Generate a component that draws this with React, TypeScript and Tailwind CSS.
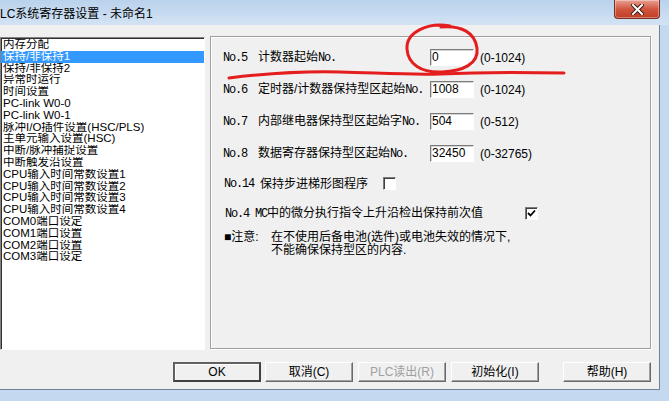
import React from 'react';

const items = [
  '内存分配',
  '保持/非保持1',
  '保持/非保持2',
  '异常时运行',
  '时间设置',
  'PC-link W0-0',
  'PC-link W0-1',
  '脉冲I/O插件设置(HSC/PLS)',
  '主单元输入设置(HSC)',
  '中断/脉冲捕捉设置',
  '中断触发沿设置',
  'CPU输入时间常数设置1',
  'CPU输入时间常数设置2',
  'CPU输入时间常数设置3',
  'CPU输入时间常数设置4',
  'COM0端口设定',
  'COM1端口设置',
  'COM2端口设置',
  'COM3端口设定',
];

const mono = "font-['Liberation_Mono',monospace] tracking-[-1.2px]";

function CloseButton() {
  return (
    <div className="ml-auto mr-[9px] flex h-[19px] w-[46px] items-center justify-center rounded-b-[4px] border border-t-0 border-[#7a2b22] bg-gradient-to-b from-[#e8a193] via-[#d0563f] to-[#c23b24] shadow-[inset_0_0_0_1px_rgba(255,255,255,0.35)]">
      <svg width="13" height="11" viewBox="0 0 13 11">
        <path d="M2 1 L11 10 M11 1 L2 10" stroke="#3a1a14" strokeWidth="4" strokeLinecap="square" />
        <path d="M2 1 L11 10 M11 1 L2 10" stroke="#ffffff" strokeWidth="2" strokeLinecap="square" />
      </svg>
    </div>
  );
}

function Field({ value }: { value: string }) {
  return (
    <div className="h-[17px] w-[44px] border border-b-white border-l-[#7a7a7a] border-r-white border-t-[#7a7a7a] bg-white pl-[1px] leading-[15px] shadow-[inset_1px_1px_0_#d5d5d5]">
      {value}
    </div>
  );
}

function Check({ checked }: { checked?: boolean }) {
  return (
    <div className="flex h-[13px] w-[13px] items-center justify-center border border-b-white border-l-[#7a7a7a] border-r-white border-t-[#7a7a7a] bg-white shadow-[inset_1px_1px_0_#404040]">
      {checked && (
        <svg width="9" height="9" viewBox="0 0 9 9">
          <path d="M1 4 L3.5 6.5 L8 1.5" stroke="#000" strokeWidth="1.8" fill="none" />
        </svg>
      )}
    </div>
  );
}

function NumRow({ no, label, value, range }: { no: string; label: string; value: string; range: string }) {
  return (
    <div className="flex h-[17px] items-center">
      <span className={`w-[35px] ${mono}`}>{no}</span>
      <span className="w-[172px]">
        {label}
        <span className={mono}>No.</span>
      </span>
      <Field value={value} />
      <span className="ml-[6px]">{range}</span>
    </div>
  );
}

function Btn({ label, def, disabled, className = '' }: { label: string; def?: boolean; disabled?: boolean; className?: string }) {
  return (
    <div
      className={`flex h-[20px] w-[88px] items-center justify-center bg-[#f0f0f0] ${
        def
          ? 'border-2 border-b-[#404040] border-l-[#606060] border-r-[#404040] border-t-[#606060] shadow-[inset_1px_1px_0_#fff]'
          : 'border border-b-[#696969] border-l-white border-r-[#696969] border-t-white shadow-[inset_-1px_-1px_0_#a0a0a0]'
      } ${disabled ? 'text-[#a0a0a0]' : 'text-black'} ${className}`}
    >
      {label}
    </div>
  );
}

export default function App() {
  return (
    <div className="relative h-[401px] w-[669px] overflow-hidden bg-[#c4d9ef] font-['Liberation_Sans','Noto_Sans_CJK_SC',sans-serif] text-[12px] text-black">
      <div className="flex h-[25px] bg-gradient-to-b from-[#b9d2ec] to-[#d3e3f4]">
        <span className="mt-[7px] leading-[14px]">LC系统寄存器设置 - 未命名1</span>
        <CloseButton />
      </div>

      <div className="h-[365px] w-[660px] border-b border-r border-[#6e8298] bg-[#f0f0f0]">
        <div className="flex gap-[5px] pt-[11px]">
          <div className="mt-[1px] h-[313px] w-[205px] border border-b-white border-l-[#828282] border-r-white border-t-[#828282] bg-white shadow-[inset_1px_1px_0_#303030]">
            <div className="pt-[1px]">
              {items.map((it, i) => (
                <div
                  key={it}
                  className={`h-[11.8px] overflow-hidden whitespace-nowrap pl-[2px] text-[11.5px] leading-[11.8px] ${
                    i === 1 ? 'bg-[#3399ff] text-white' : ''
                  }`}
                >
                  {it}
                </div>
              ))}
            </div>
          </div>

          <div className="h-[313px] w-[441px] border border-[#a0a0a0] shadow-[inset_1px_1px_0_#fff,1px_1px_0_#fff]">
            <div className="flex flex-col gap-[15px] pl-[12px] pt-[12px]">
              <NumRow no="No.5" label="计数器起始" value="0" range="(0-1024)" />
              <NumRow no="No.6" label="定时器/计数器保持型区起始" value="1008" range="(0-1024)" />
              <NumRow no="No.7" label="内部继电器保持型区起始字" value="504" range="(0-512)" />
              <NumRow no="No.8" label="数据寄存器保持型区起始" value="32450" range="(0-32765)" />
            </div>

            <div className="mt-[15px] flex h-[13px] items-center pl-[13px]">
              <span className={`w-[36px] ${mono}`}>No.14</span>
              <span className="w-[123px]">保持步进梯形图程序</span>
              <Check />
            </div>

            <div className="mt-[17px] flex h-[13px] items-center pl-[14px]">
              <span className="w-[300px] whitespace-nowrap">
                <span className={mono}>No.4 MC</span>中的微分执行指令上升沿检出保持前次值
              </span>
              <Check checked />
            </div>

            <div className="mt-[11px] flex pl-[13px] leading-[13px]">
              <span className="w-[47px]">■注意:</span>
              <div>
                <div>在不使用后备电池(选件)或电池失效的情况下,</div>
                <div>不能确保保持型区的内容.</div>
              </div>
            </div>
          </div>
        </div>

        <div className="mt-[12px] flex pl-[173px]">
          <Btn label="OK" def />
          <Btn label="取消(C)" className="ml-[4px]" />
          <Btn label="PLC读出(R)" disabled className="ml-[5px]" />
          <Btn label="初始化(I)" className="ml-[5px]" />
          <Btn label="帮助(H)" className="ml-[24px]" />
        </div>
      </div>

      <svg className="pointer-events-none absolute left-0 top-0" width="669" height="401" viewBox="0 0 669 401">
        <path
          d="M450 26 C428 22, 406 32, 407 49 C408 64, 421 73, 442 72 C463 71, 479 64, 477 48 C475 33, 462 25, 441 27"
          stroke="#e41e1e"
          strokeWidth="3"
          fill="none"
          strokeLinecap="round"
        />
        <path
          d="M229 78 C262 74, 300 71, 340 72 C380 73, 410 75, 440 74 C480 72, 520 72, 564 73"
          stroke="#e41e1e"
          strokeWidth="3"
          fill="none"
          strokeLinecap="round"
        />
      </svg>
    </div>
  );
}
